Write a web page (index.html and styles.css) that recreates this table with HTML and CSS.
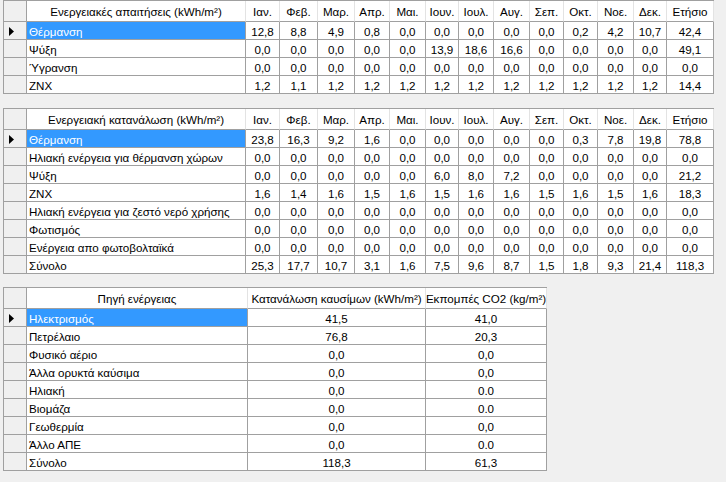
FILE: index.html
```html
<!DOCTYPE html>
<html lang="el">
<head>
<meta charset="utf-8">
<link rel="stylesheet" href="styles.css">
</head>
<body>
<div class="page">

<div class="grid months t1">
  <div class="corner"></div>
  <div class="hd">Ενεργειακές απαιτήσεις (kWh/m²)</div>
  <div class="hd">Ιαν.</div><div class="hd">Φεβ.</div><div class="hd">Μαρ.</div><div class="hd">Απρ.</div><div class="hd">Μαι.</div><div class="hd">Ιουν.</div><div class="hd">Ιουλ.</div><div class="hd">Αυγ.</div><div class="hd">Σεπ.</div><div class="hd">Οκτ.</div><div class="hd">Νοε.</div><div class="hd">Δεκ.</div><div class="hd">Ετήσιο</div>

  <div class="rh"><svg class="arrow" width="5" height="9" viewBox="0 0 5 9"><polygon points="0,0 5,4.5 0,9" fill="#000"/></svg></div>
  <div class="lbl sel">Θέρμανση</div>
  <div>12,8</div><div>8,8</div><div>4,9</div><div>0,8</div><div>0,0</div><div>0,0</div><div>0,0</div><div>0,0</div><div>0,0</div><div>0,2</div><div>4,2</div><div>10,7</div><div>42,4</div>

  <div class="rh"></div>
  <div class="lbl">Ψύξη</div>
  <div>0,0</div><div>0,0</div><div>0,0</div><div>0,0</div><div>0,0</div><div>13,9</div><div>18,6</div><div>16,6</div><div>0,0</div><div>0,0</div><div>0,0</div><div>0,0</div><div>49,1</div>

  <div class="rh"></div>
  <div class="lbl">Ύγρανση</div>
  <div>0,0</div><div>0,0</div><div>0,0</div><div>0,0</div><div>0,0</div><div>0,0</div><div>0,0</div><div>0,0</div><div>0,0</div><div>0,0</div><div>0,0</div><div>0,0</div><div>0,0</div>

  <div class="rh"></div>
  <div class="lbl">ΖΝΧ</div>
  <div>1,2</div><div>1,1</div><div>1,2</div><div>1,2</div><div>1,2</div><div>1,2</div><div>1,2</div><div>1,2</div><div>1,2</div><div>1,2</div><div>1,2</div><div>1,2</div><div>14,4</div>
</div>

<div class="grid months t2">
  <div class="corner"></div>
  <div class="hd">Ενεργειακή κατανάλωση (kWh/m²)</div>
  <div class="hd">Ιαν.</div><div class="hd">Φεβ.</div><div class="hd">Μαρ.</div><div class="hd">Απρ.</div><div class="hd">Μαι.</div><div class="hd">Ιουν.</div><div class="hd">Ιουλ.</div><div class="hd">Αυγ.</div><div class="hd">Σεπ.</div><div class="hd">Οκτ.</div><div class="hd">Νοε.</div><div class="hd">Δεκ.</div><div class="hd">Ετήσιο</div>

  <div class="rh"><svg class="arrow" width="5" height="9" viewBox="0 0 5 9"><polygon points="0,0 5,4.5 0,9" fill="#000"/></svg></div>
  <div class="lbl sel">Θέρμανση</div>
  <div>23,8</div><div>16,3</div><div>9,2</div><div>1,6</div><div>0,0</div><div>0,0</div><div>0,0</div><div>0,0</div><div>0,0</div><div>0,3</div><div>7,8</div><div>19,8</div><div>78,8</div>

  <div class="rh"></div>
  <div class="lbl">Ηλιακή ενέργεια για θέρμανση χώρων</div>
  <div>0,0</div><div>0,0</div><div>0,0</div><div>0,0</div><div>0,0</div><div>0,0</div><div>0,0</div><div>0,0</div><div>0,0</div><div>0,0</div><div>0,0</div><div>0,0</div><div>0,0</div>

  <div class="rh"></div>
  <div class="lbl">Ψύξη</div>
  <div>0,0</div><div>0,0</div><div>0,0</div><div>0,0</div><div>0,0</div><div>6,0</div><div>8,0</div><div>7,2</div><div>0,0</div><div>0,0</div><div>0,0</div><div>0,0</div><div>21,2</div>

  <div class="rh"></div>
  <div class="lbl">ΖΝΧ</div>
  <div>1,6</div><div>1,4</div><div>1,6</div><div>1,5</div><div>1,6</div><div>1,5</div><div>1,6</div><div>1,6</div><div>1,5</div><div>1,6</div><div>1,5</div><div>1,6</div><div>18,3</div>

  <div class="rh"></div>
  <div class="lbl">Ηλιακή ενέργεια για ζεστό νερό χρήσης</div>
  <div>0,0</div><div>0,0</div><div>0,0</div><div>0,0</div><div>0,0</div><div>0,0</div><div>0,0</div><div>0,0</div><div>0,0</div><div>0,0</div><div>0,0</div><div>0,0</div><div>0,0</div>

  <div class="rh"></div>
  <div class="lbl">Φωτισμός</div>
  <div>0,0</div><div>0,0</div><div>0,0</div><div>0,0</div><div>0,0</div><div>0,0</div><div>0,0</div><div>0,0</div><div>0,0</div><div>0,0</div><div>0,0</div><div>0,0</div><div>0,0</div>

  <div class="rh"></div>
  <div class="lbl">Ενέργεια απο φωτοβολταϊκά</div>
  <div>0,0</div><div>0,0</div><div>0,0</div><div>0,0</div><div>0,0</div><div>0,0</div><div>0,0</div><div>0,0</div><div>0,0</div><div>0,0</div><div>0,0</div><div>0,0</div><div>0,0</div>

  <div class="rh"></div>
  <div class="lbl">Σύνολο</div>
  <div>25,3</div><div>17,7</div><div>10,7</div><div>3,1</div><div>1,6</div><div>7,5</div><div>9,6</div><div>8,7</div><div>1,5</div><div>1,8</div><div>9,3</div><div>21,4</div><div>118,3</div>
</div>

<div class="grid sources t3">
  <div class="corner"></div>
  <div class="hd">Πηγή ενέργειας</div>
  <div class="hd">Κατανάλωση καυσίμων (kWh/m²)</div>
  <div class="hd">Εκπομπές CO2 (kg/m²)</div>

  <div class="rh"><svg class="arrow" width="5" height="9" viewBox="0 0 5 9"><polygon points="0,0 5,4.5 0,9" fill="#000"/></svg></div>
  <div class="lbl sel">Ηλεκτρισμός</div><div>41,5</div><div>41,0</div>
  <div class="rh"></div><div class="lbl">Πετρέλαιο</div><div>76,8</div><div>20,3</div>
  <div class="rh"></div><div class="lbl">Φυσικό αέριο</div><div>0,0</div><div>0,0</div>
  <div class="rh"></div><div class="lbl">Άλλα ορυκτά καύσιμα</div><div>0,0</div><div>0,0</div>
  <div class="rh"></div><div class="lbl">Ηλιακή</div><div>0,0</div><div>0.0</div>
  <div class="rh"></div><div class="lbl">Βιομάζα</div><div>0,0</div><div>0.0</div>
  <div class="rh"></div><div class="lbl">Γεωθερμία</div><div>0,0</div><div>0,0</div>
  <div class="rh"></div><div class="lbl">Άλλο ΑΠΕ</div><div>0,0</div><div>0.0</div>
  <div class="rh"></div><div class="lbl">Σύνολο</div><div>118,3</div><div>61,3</div>
</div>

</div>
</body>
</html>
```

FILE: styles.css
```css
html, body {
  margin: 0;
  padding: 0;
  background: #f0f0f0;
}

body {
  font-family: "Liberation Sans", Arial, sans-serif;
  font-size: 11.6px;
  color: #000;
}

.page {
  display: flex;
  flex-direction: column;
  align-items: flex-start;
  padding-left: 3px;
}

.grid {
  display: grid;
  grid-template-rows: 21px;
  grid-auto-rows: 18px;
  border-left: 1px solid #a0a0a0;
  border-top: 1px solid #a0a0a0;
  background: #fff;
}

.months {
  grid-template-columns: 23px 219px 34px 38px 37px 35px 36px 33px 35px 36px 34px 34px 36px 33px 47px;
}

.sources {
  grid-template-columns: 23px 221px 178px 121px;
}

.t2 { margin-top: 14px; }
.t3 { margin-top: 13px; }

.grid > div {
  box-sizing: border-box;
  border-right: 1px solid #a0a0a0;
  border-bottom: 1px solid #a0a0a0;
  display: flex;
  align-items: center;
  justify-content: center;
  white-space: nowrap;
  overflow: hidden;
  padding-top: 1px;
}

.grid > .hd {
  background: #fff;
  border-right-color: #e3e3e3;
}

.grid > .corner {
  background: #f0f0f0;
  border-right-color: #a0a0a0;
}

.grid > .rh {
  background: #f0f0f0;
  justify-content: flex-start;
  padding-left: 5px;
}

.grid > .lbl {
  justify-content: flex-start;
  padding-left: 2px;
}

.grid > .sel {
  background: #3399ff;
  color: #fff;
}

.arrow {
  display: block;
}
```
